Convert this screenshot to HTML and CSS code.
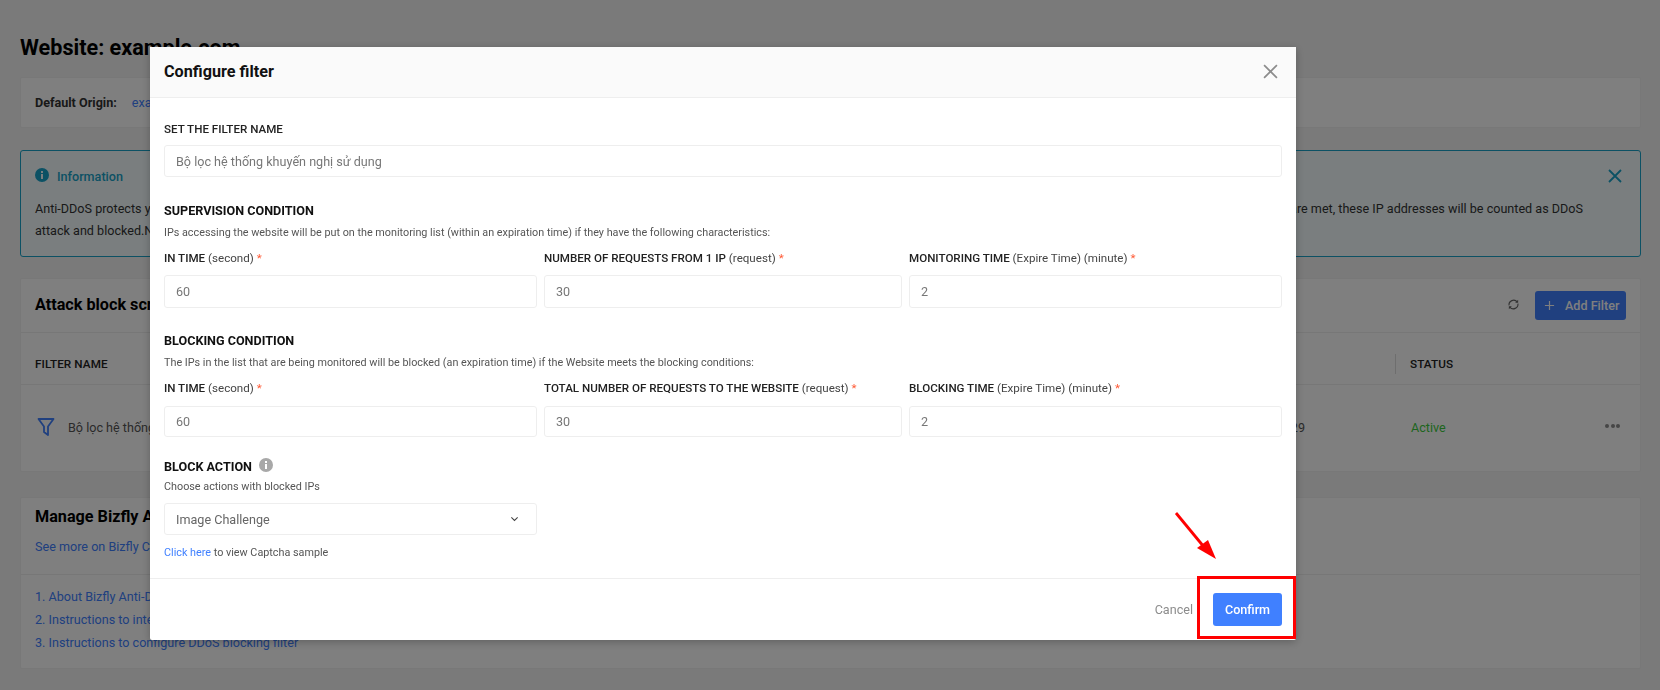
FILE: index.html
```html
<!DOCTYPE html>
<html lang="en">
<head>
<meta charset="utf-8">
<title>Configure filter</title>
<link rel="stylesheet" href="styles.css">
</head>
<body>
<main class="page">
  <h1 class="page-title">Website: example.com</h1>
  <section class="card origin">
    <strong>Default Origin:</strong><a class="link" href="#">example.com</a>
  </section>
  <section class="alert">
    <div class="alert-head">
      <svg class="info-icon" viewBox="0 0 14 14"><circle cx="7" cy="7" r="7" fill="currentColor"/><rect x="6" y="6" width="2" height="5" fill="#f4fdff"/><rect x="6" y="3" width="2" height="2" fill="#f4fdff"/></svg>
      <span class="alert-title">Information</span>
      <svg class="alert-close" viewBox="0 0 14 14"><path d="M1 1l12 12M13 1L1 13" fill="none" stroke="currentColor" stroke-width="1.8"/></svg>
    </div>
    <p class="alert-line"><span>Anti-DDoS protects your website</span><span>If the conditions are met, these IP addresses will be counted as DDoS</span></p>
    <p class="alert-line"><span>attack and blocked.No further action is needed.</span></p>
  </section>
  <section class="card table-card">
    <div class="table-top">
      <h2 class="card-title">Attack block script</h2>
      <svg class="refresh" viewBox="0 0 14 14"><path d="M2.2 8A5 5 0 0 1 11 4.2M11.8 6A5 5 0 0 1 3 9.8" fill="none" stroke="currentColor" stroke-width="1.2"/><path d="M12 1.8v3.4H8.8zM2 12.2V8.8h3.2z" fill="currentColor"/></svg>
      <button class="add-btn" type="button"><svg class="plus" viewBox="0 0 12 12"><path d="M6 1v10M1 6h10" stroke="currentColor" stroke-width="1.3"/></svg>Add Filter</button>
    </div>
    <div class="table-row table-head">
      <span class="cell-name">FILTER NAME</span>
      <span class="cell-status">STATUS</span>
    </div>
    <div class="table-row table-body">
      <span class="cell-name with-icon">
        <svg class="funnel" viewBox="0 0 18 20"><path d="M1.5 2h15l-5.5 7.5V18l-4-3V9.5z" fill="none" stroke="currentColor" stroke-width="1.8" stroke-linejoin="round"/></svg>
        Bộ lọc hệ thống khuyến nghị sử dụng
      </span>
      <span class="cell-date">2023-08-15 10:29:29</span>
      <span class="cell-state"><span class="active">Active</span><span class="dots"><i></i><i></i><i></i></span></span>
    </div>
  </section>
  <section class="card manage">
    <div class="manage-top">
      <h2 class="card-title">Manage Bizfly Anti-DDoS</h2>
      <a class="link see-more" href="#">See more on Bizfly Cloud</a>
    </div>
    <div class="manage-links">
      <a class="link" href="#">1. About Bizfly Anti-DDoS</a>
      <a class="link" href="#">2. Instructions to integrate Anti-DDoS</a>
      <a class="link" href="#">3. Instructions to configure DDoS blocking filter</a>
    </div>
  </section>
</main>

<div class="overlay"></div>

<div class="modal">
  <header class="modal-head">
    <h2 class="modal-title">Configure filter</h2>
    <svg class="modal-close" viewBox="0 0 14 14"><path d="M1 1l12 12M13 1L1 13" fill="none" stroke="currentColor" stroke-width="1.6"/></svg>
  </header>
  <div class="modal-body">
    <div class="label">SET THE FILTER NAME</div>
    <div class="input input-name">Bộ lọc hệ thống khuyến nghị sử dụng</div>

    <h3 class="section first">SUPERVISION CONDITION</h3>
    <p class="desc gap-s">IPs accessing the website will be put on the monitoring list (within an expiration time) if they have the following characteristics:</p>
    <div class="fields">
      <div><div class="label">IN TIME <span class="unit">(second)</span> <span class="req">*</span></div><div class="input">60</div></div>
      <div><div class="label">NUMBER OF REQUESTS FROM 1 IP <span class="unit">(request)</span> <span class="req">*</span></div><div class="input">30</div></div>
      <div><div class="label">MONITORING TIME <span class="unit">(Expire Time) (minute)</span> <span class="req">*</span></div><div class="input">2</div></div>
    </div>

    <h3 class="section second">BLOCKING CONDITION</h3>
    <p class="desc gap-s">The IPs in the list that are being monitored will be blocked (an expiration time) if the Website meets the blocking conditions:</p>
    <div class="fields">
      <div><div class="label">IN TIME <span class="unit">(second)</span> <span class="req">*</span></div><div class="input short">60</div></div>
      <div><div class="label">TOTAL NUMBER OF REQUESTS TO THE WEBSITE <span class="unit">(request)</span> <span class="req">*</span></div><div class="input short">30</div></div>
      <div><div class="label">BLOCKING TIME <span class="unit">(Expire Time) (minute)</span> <span class="req">*</span></div><div class="input short">2</div></div>
    </div>

    <h3 class="section third">BLOCK ACTION
      <svg class="hint" viewBox="0 0 14 14"><circle cx="7" cy="7" r="7" fill="#a8a8a8"/><rect x="6" y="6" width="2" height="5" fill="#fff"/><rect x="6" y="3" width="2" height="2" fill="#fff"/></svg>
    </h3>
    <p class="desc gap-xs">Choose actions with blocked IPs</p>
    <div class="fields select-row">
      <div class="input select">Image Challenge
        <svg class="chevron" viewBox="0 0 10 6"><path d="M1.5 1.2L5 4.6l3.5-3.4" fill="none" stroke="currentColor" stroke-width="1.2"/></svg>
      </div>
    </div>
    <p class="desc sample"><a class="sample-link" href="#">Click here</a> to view Captcha sample</p>
  </div>
  <footer class="modal-foot">
    <span class="cancel">Cancel</span>
    <button class="confirm" type="button">Confirm</button>
  </footer>
</div>

<div class="mark-box"></div>
<svg class="mark-arrow" viewBox="0 0 44 50"><path d="M2 2L30 36" stroke="#f00" stroke-width="2.8" fill="none"/><path d="M42 48L23 37l11-8z" fill="#f00"/></svg>
</body>
</html>
```

FILE: styles.css
```css
* { box-sizing: border-box; }
html, body { margin: 0; height: 100%; overflow: hidden; }
body {
  background: #f5f5f5;
  color: #333;
  font-family: Roboto, "Liberation Sans", sans-serif;
  font-size: 12.6px;
  position: relative;
}
h1, h2, h3, p { margin: 0; }
a { text-decoration: none; }

.page { padding: 34px 19px 0 20px; }
.page-title { font-size: 21.6px; line-height: 28px; font-weight: 700; color: #000; margin-bottom: 15px; }
.card { background: #fff; border: 1px solid #f0f0f0; border-radius: 2px; }
.link { color: #4080ff; }

.origin { height: 51px; display: flex; align-items: center; padding-left: 14px; gap: 15px; margin-bottom: 22px; }
.origin strong { font-weight: 700; }

.alert { height: 107px; margin-bottom: 21px; padding: 15px 57px 0 14px; border: 1px solid #18a3c9; border-radius: 3px; background: #f4fdff; color: #333; }
.alert-head { display: flex; align-items: center; height: 20px; margin-bottom: 12px; position: relative; color: #18a3c9; }
.info-icon { width: 14px; height: 14px; margin-right: 8px; position: relative; top: -1px; }
.alert-title { font-weight: 500; }
.alert-close { position: absolute; right: -39px; top: 3px; width: 14px; height: 14px; }
.alert-line { display: flex; justify-content: space-between; line-height: 22px; }

.table-card { margin-bottom: 25px; }
.card-title { font-size: 16.2px; font-weight: 700; color: #000; line-height: 22px; }
.table-top { height: 54px; display: flex; align-items: center; padding: 0 14px 0 14px; border-bottom: 1px solid #eee; }
.table-top .card-title { flex: 1; position: relative; top: -1px; }
.refresh { width: 13px; height: 13px; color: #666; margin-right: 15px; position: relative; top: -1px; }
.add-btn { height: 29px; width: 91px; display: flex; align-items: center; padding: 0 0 0 9px; border: 0; border-radius: 3px; background: #4080ff; color: #fff; font: 500 12.6px Roboto, sans-serif; }
.plus { width: 11px; height: 11px; margin-right: 10px; }
.table-row { display: flex; align-items: center; padding-left: 14px; }
.table-head { height: 52px; padding-top: 11px; border-bottom: 1px solid #eee; font-size: 11.7px; font-weight: 500; color: #222; letter-spacing: .1px; }
.table-body { height: 86px; }
.cell-name { flex: 1; }
.cell-status { width: 245px; height: 20px; line-height: 20px; border-left: 1px solid #ddd; padding-left: 14px; }
.with-icon { display: flex; align-items: center; gap: 13px; color: #555; position: relative; top: -1px; }
.funnel { width: 18px; height: 20px; color: #4080ff; margin-left: 2px; }
.cell-date { margin-right: 106px; color: #555; position: relative; top: -1px; }
.cell-state { width: 229px; display: flex; justify-content: space-between; align-items: center; padding-right: 20px; }
.active { color: #3ccb3c; position: relative; top: -1px; }
.dots { display: flex; gap: 1.5px; position: relative; top: -2px; }
.dots i { width: 4px; height: 4px; border-radius: 50%; background: #8c8c8c; }

.manage-top { height: 77px; padding: 5px 14px 0; border-bottom: 1px solid #eee; }
.manage-top .card-title { margin-bottom: 7px; line-height: 28px; }
.manage { height: 172px; }
.see-more { display: block; line-height: 18px; }
.manage-links { display: flex; flex-direction: column; gap: 5px; padding: 13px 14px; line-height: 18px; }

.overlay { position: fixed; inset: 0; background: rgba(0, 0, 0, .5); }

.modal { position: fixed; left: 150px; top: 47px; width: 1146px; height: 593px; background: #fff; border-radius: 0 0 2px 2px; box-shadow: 0 2px 8px rgba(0, 0, 0, .25); display: flex; flex-direction: column; }
.modal-head { height: 51px; flex: none; background: #fafafa; border-bottom: 1px solid #eee; display: flex; align-items: center; justify-content: space-between; padding: 0 18px 2px 14px; }
.modal-title { font-size: 16.2px; font-weight: 700; color: #111; }
.modal-close { width: 15px; height: 15px; color: #8c8c8c; }
.modal-body { flex: 1; padding: 23px 14px 0; }
.label { font-size: 11.6px; line-height: 16px; font-weight: 500; letter-spacing: 0; color: #222; }
.unit { font-weight: 400; color: #444; }
.req { color: #ff5a36; font-weight: 400; }
.input { height: 33px; margin-top: 9px; padding: 0 11px; display: flex; align-items: center; border: 1px solid #eee; border-radius: 3px; background: #fff; color: #777; font-size: 12.6px; }
.input-name { height: 32px; margin-top: 8px; }
.short { height: 31px; margin-top: 10px; }
.section { font-size: 12.6px; line-height: 16px; font-weight: 700; color: #111; }
.first { margin-top: 26px; }
.second { margin-top: 25px; }
.third { margin-top: 22px; display: flex; align-items: center; gap: 7px; }
.hint { width: 14px; height: 14px; position: relative; top: -2px; }
.desc { font-size: 10.8px; line-height: 16px; color: #555; }
.gap-s { margin-top: 6px; margin-bottom: 9px; }
.gap-xs { margin-top: 4px; }
.fields { display: grid; grid-template-columns: 1fr 358px 1fr; column-gap: 7px; }
.select { height: 32px; justify-content: space-between; color: #666; padding-right: 17px; margin-top: 8px; }
.chevron { width: 9px; height: 6px; color: #444; }
.sample { margin-top: 10px; }
.sample-link { color: #4080ff; }
.modal-foot { height: 62px; flex: none; border-top: 1px solid #eee; display: flex; align-items: center; justify-content: flex-end; gap: 20px; padding: 0 14px 0 0; }
.cancel { color: #8c8c8c; font-size: 12.6px; }
.confirm { width: 69px; height: 33px; border: 0; border-radius: 3px; background: #4080ff; color: #fff; font: 500 12.6px Roboto, sans-serif; }

.mark-box { position: fixed; left: 1197px; top: 576px; width: 99px; height: 63px; border: 3px solid #f00; }
.mark-arrow { position: fixed; left: 1174px; top: 511px; width: 44px; height: 50px; }
```
